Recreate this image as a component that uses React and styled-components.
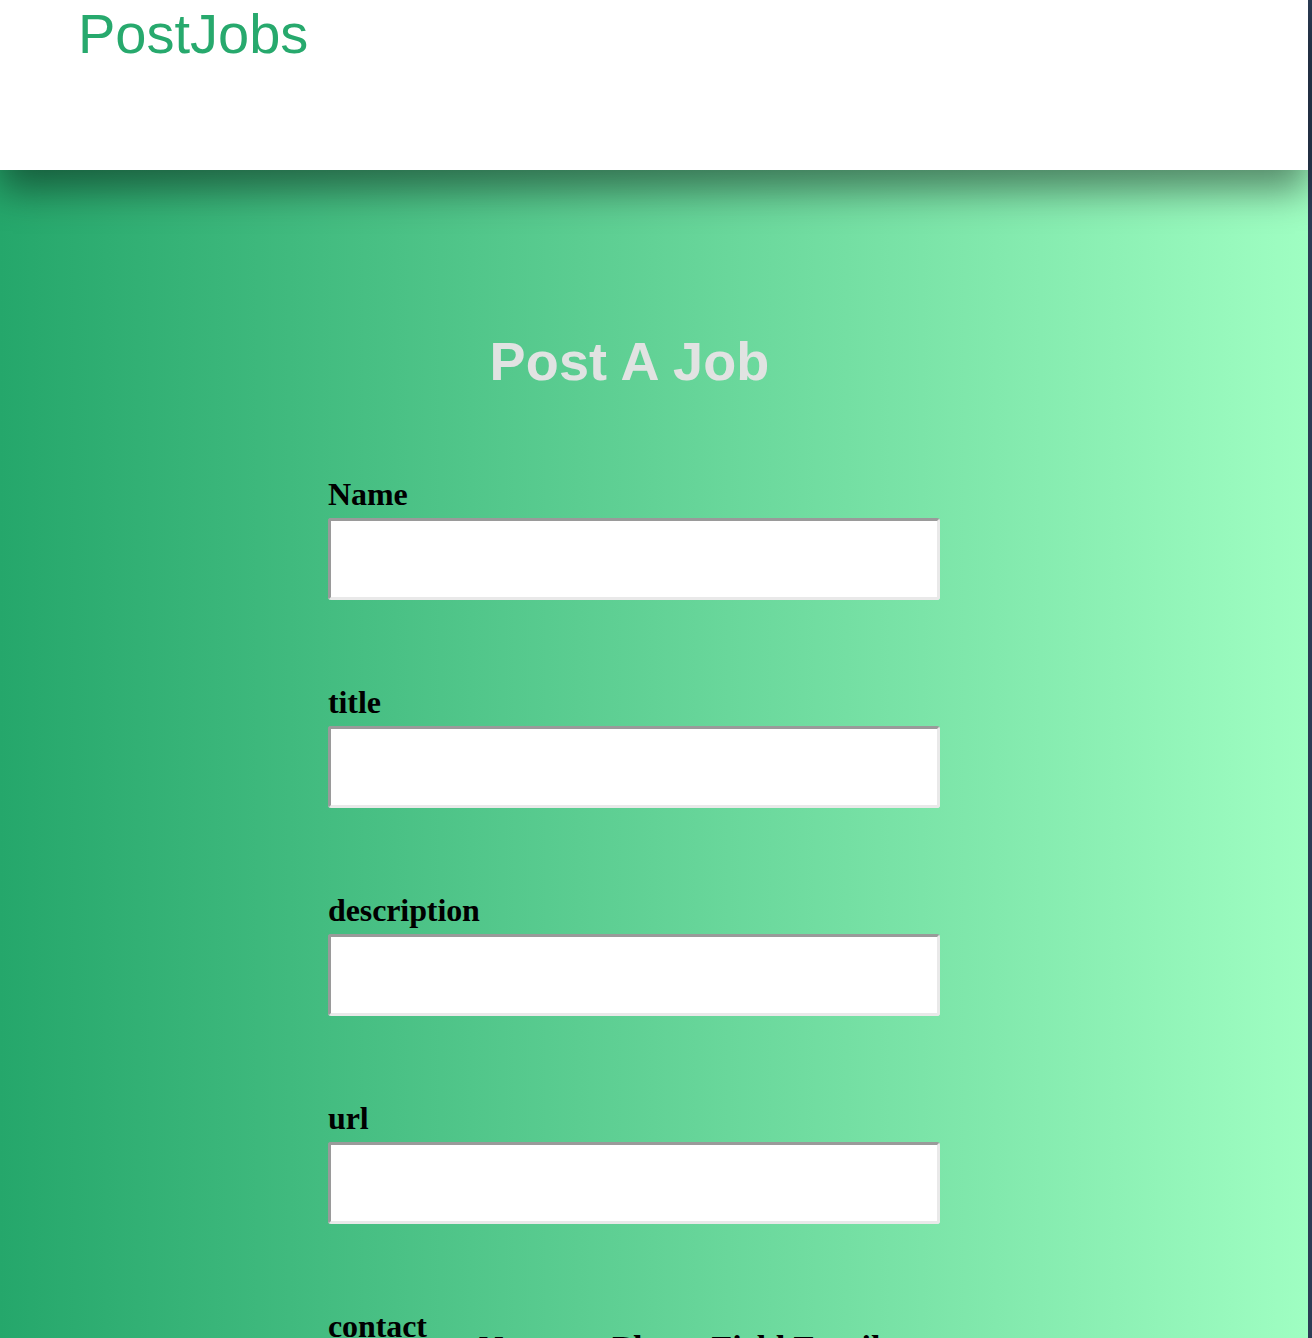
import React from "react";
import styled, { createGlobalStyle } from "styled-components";

const GlobalStyle = createGlobalStyle`
  html, body {
    margin: 0;
    padding: 0;
    background: #2b3c55;
  }
  body {
    font-family: "Liberation Serif", "Times New Roman", serif;
  }
`;

const Page = styled.div`
  width: 1308px;
  min-height: 100vh;
  display: flex;
  flex-direction: column;
  background: linear-gradient(to right, #25a76b 0%, #62d296 50%, #9ffec2 100%);
`;

const Header = styled.header`
  position: relative;
  z-index: 1;
  height: 170px;
  box-sizing: border-box;
  padding: 2px 0 0 78px;
  background: #ffffff;
  box-shadow: 0 20px 36px rgba(0, 0, 0, 0.45);
`;

const Logo = styled.div`
  font-family: "Liberation Sans", Arial, sans-serif;
  font-size: 56px;
  line-height: 64px;
  font-weight: 400;
  color: #27a96d;
`;

const Main = styled.main`
  flex: 1;
  padding: 160px 0 40px 328px;
`;

const Form = styled.form`
  width: 603px;
  display: flex;
  flex-direction: column;
  gap: 84px;
`;

const Title = styled.h1`
  margin: 0;
  font-family: "Liberation Sans", Arial, sans-serif;
  font-size: 54px;
  line-height: 62px;
  font-weight: 700;
  color: #e1e3e2;
  text-align: center;
  letter-spacing: 0.2px;
`;

const Field = styled.div`
  display: flex;
  flex-direction: column;
  gap: 5px;
`;

const Label = styled.label`
  font-family: "Liberation Serif", "Times New Roman", serif;
  font-size: 32px;
  line-height: 37px;
  font-weight: 700;
  color: #000;
  letter-spacing: -0.1px;
`;

const Input = styled.input`
  width: 612px;
  height: 82px;
  box-sizing: border-box;
  margin: 0;
  background: #ffffff;
  border-style: solid;
  border-width: 3px;
  border-color: #9a9a9a #e9e9e9 #e9e9e9 #9a9a9a;
  border-radius: 3px;
  outline: none;
  font-size: 20px;
`;

const ContactRow = styled.div`
  display: flex;
  align-items: flex-start;
  gap: 52px;
`;

const ContactOptions = styled.span`
  padding-top: 21px;
  font-family: "Liberation Serif", "Times New Roman", serif;
  font-size: 34px;
  line-height: 37px;
  font-weight: 700;
  color: #000;
  white-space: nowrap;
`;

const fields = ["Name", "title", "description", "url"];

export default function App() {
  return (
    <>
      <GlobalStyle />
      <Page>
        <Header>
          <Logo>PostJobs</Logo>
        </Header>
        <Main>
          <Form onSubmit={(e) => e.preventDefault()}>
            <Title>Post A Job</Title>
            {fields.map((f) => (
              <Field key={f}>
                <Label htmlFor={f}>{f}</Label>
                <Input id={f} type="text" />
              </Field>
            ))}
            <ContactRow>
              <Label>contact</Label>
              <ContactOptions>Name or Phone Field Email</ContactOptions>
            </ContactRow>
          </Form>
        </Main>
      </Page>
    </>
  );
}
